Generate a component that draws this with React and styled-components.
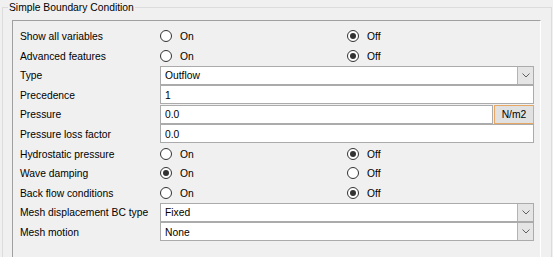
import React from "react"
import styled, { createGlobalStyle } from "styled-components"

const GlobalStyle = createGlobalStyle`
  html, body {
    margin: 0;
    overflow: hidden;
    background: #f0f0f0;
  }
  body {
    font-family: "Liberation Sans", Arial, sans-serif;
    font-size: 10.3px;
    color: #000;
  }
`

const Group = styled.fieldset`
  margin: 0 0 0 2px;
  width: 550px;
  box-sizing: border-box;
  border: 1px solid #dcdcdc;
  padding: 0 10px 0 9px;
`

const Legend = styled.legend`
  margin-left: -4px;
  padding: 2px 1px 0;
  line-height: 12px;
`

const Panel = styled.div`
  margin-top: 6px;
  border-top: 1px solid #a0a0a0;
  border-left: 1px solid #a0a0a0;
  border-right: 1px solid #fff;
  padding: 5.2px 6px 30px 7px;
  display: flex;
  flex-direction: column;
`

const Row = styled.div`
  display: grid;
  grid-template-columns: 140px 1fr;
  align-items: center;
  height: 19.6px;
`

const Label = styled.span`
  white-space: nowrap;
  line-height: 13px;
  padding-top: 1px;
`

const Options = styled.div`
  display: grid;
  grid-template-columns: 187px 1fr;
  align-items: center;
`

const Option = styled.span`
  display: inline-flex;
  align-items: center;
  gap: 8px;
  line-height: 13px;
`

const Circle = styled.span`
  width: 12px;
  height: 12px;
  box-sizing: border-box;
  border-radius: 50%;
  border: 1px solid #333;
  background: #fff;
  display: flex;
  align-items: center;
  justify-content: center;

  &::after {
    content: "";
    width: 6px;
    height: 6px;
    border-radius: 50%;
    background: ${(p) => (p.$checked ? "#333" : "transparent")};
  }
`

const Caption = styled.span`
  padding-top: 1px;
`

const Line = styled.div`
  display: flex;
  gap: 1px;
  height: 19px;
`

const Field = styled.div`
  flex: 1;
  height: 19px;
  box-sizing: border-box;
  background: #fff;
  border: 1px solid #ababab;
  display: flex;
  align-items: center;
  padding: 1px 0 0 4px;
  line-height: 13px;
`

const Value = styled.span`
  flex: 1;
`

const DropButton = styled.span`
  width: 16px;
  height: calc(100% + 1px);
  margin-top: -1px;
  box-sizing: border-box;
  background: #e5e5e5;
  border-left: 1px solid #b4b4b4;
  display: flex;
  align-items: center;
  justify-content: center;
`

const UnitButton = styled.span`
  width: 40px;
  height: 19px;
  box-sizing: border-box;
  background: #e1e1e1;
  border: 1px solid #e6a765;
  display: flex;
  align-items: center;
  justify-content: center;
  padding-top: 1px;
  line-height: 13px;
`

function Radio({ on }) {
  return (
    <Options>
      <Option>
        <Circle $checked={on} />
        <Caption>On</Caption>
      </Option>
      <Option>
        <Circle $checked={!on} />
        <Caption>Off</Caption>
      </Option>
    </Options>
  )
}

function Combo({ value }) {
  return (
    <Field>
      <Value>{value}</Value>
      <DropButton>
        <svg width="8" height="5" viewBox="0 0 8 5">
          <path d="M0.5 0.5 L4 4 L7.5 0.5" fill="none" stroke="#606060" strokeWidth="1" />
        </svg>
      </DropButton>
    </Field>
  )
}

export default function App() {
  return (
    <>
      <GlobalStyle />
      <Group>
        <Legend>Simple Boundary Condition</Legend>
        <Panel>
          <Row>
            <Label>Show all variables</Label>
            <Radio on={false} />
          </Row>
          <Row>
            <Label>Advanced features</Label>
            <Radio on={false} />
          </Row>
          <Row>
            <Label>Type</Label>
            <Combo value="Outflow" />
          </Row>
          <Row>
            <Label>Precedence</Label>
            <Field>1</Field>
          </Row>
          <Row>
            <Label>Pressure</Label>
            <Line>
              <Field>0.0</Field>
              <UnitButton>N/m2</UnitButton>
            </Line>
          </Row>
          <Row>
            <Label>Pressure loss factor</Label>
            <Field>0.0</Field>
          </Row>
          <Row>
            <Label>Hydrostatic pressure</Label>
            <Radio on={false} />
          </Row>
          <Row>
            <Label>Wave damping</Label>
            <Radio on={true} />
          </Row>
          <Row>
            <Label>Back flow conditions</Label>
            <Radio on={false} />
          </Row>
          <Row>
            <Label>Mesh displacement BC type</Label>
            <Combo value="Fixed" />
          </Row>
          <Row>
            <Label>Mesh motion</Label>
            <Combo value="None" />
          </Row>
        </Panel>
      </Group>
    </>
  )
}
